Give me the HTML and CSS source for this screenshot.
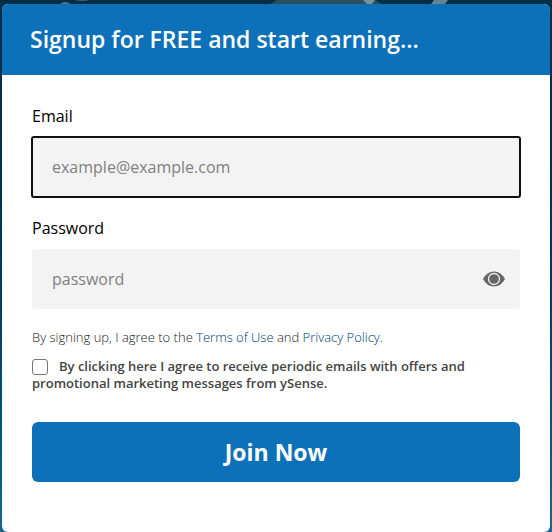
FILE: index.html
```html
<!DOCTYPE html>
<html lang="en">
<head>
<meta charset="utf-8">
<meta name="viewport" content="width=device-width, initial-scale=1">
<title>Signup</title>
<link rel="stylesheet" href="styles.css">
</head>
<body>
<svg class="backdrop" viewBox="0 0 552 4" aria-hidden="true">
  <path d="M60 4Q65 0 71 4Z" fill="#54717d"/>
  <path d="M75 0H90Q82 2 75 0Z" fill="#42616e"/>
  <path d="M270 4L277 0H375L382 4Z" fill="#294e5e"/>
  <path d="M363 0H375L372 4H367Z" fill="#78919b"/>
  <path d="M431 4L434 0H448L445 4Z" fill="#648290"/>
</svg>
<main class="card">
  <header class="card-header">
    <h1>Signup for FREE and start earning...</h1>
  </header>
  <form class="form">
    <label class="label" for="email">Email</label>
    <input class="field field-active" id="email" type="email" placeholder="example@example.com">
    <label class="label" for="password">Password</label>
    <div class="password">
      <input class="field" id="password" type="password" placeholder="password">
      <button class="reveal" type="button" aria-label="Show password">
        <svg viewBox="0 0 22 16" width="22" height="16" aria-hidden="true">
          <path d="M0 8Q4 .5 11 .5T22 8Q18 15.500 11 15.500T0 8Z" fill="#666"/>
          <circle cx="11" cy="8" r="5.500" fill="#666" stroke="#f3f3f3" stroke-width="1.300"/>
        </svg>
      </button>
    </div>
    <p class="terms">By signing up, I agree to the <a href="#terms">Terms of Use</a> and <a href="#privacy">Privacy Policy</a>.</p>
    <div class="consent">
      <input class="check" id="consent" type="checkbox"><label for="consent">By clicking here I agree to receive periodic emails with offers and promotional marketing messages from ySense.</label>
    </div>
    <button class="submit" type="submit">Join Now</button>
  </form>
</main>
</body>
</html>
```
FILE: styles.css
```css
* {
  box-sizing: border-box;
}

html {
  min-height: 100%;
  background: linear-gradient(#002e45, #00304a 30%, #003f66 60%, #00557f 80%, #1c668e);
}

body {
  margin: 0;
  padding: 4px 2px 0;
  font-family: "Open Sans", "Noto Sans", sans-serif;
  font-size: 16px;
  color: #000;
}

.backdrop {
  position: absolute;
  top: 0;
  left: 0;
  width: 100%;
}

.card {
  position: relative;
  overflow: hidden;
  border-radius: 6px;
  background: #fff;
}

.card-header {
  padding: 20px 28px;
  background: #0d71b9;
}

h1 {
  margin: 0;
  font-size: 23px;
  font-weight: 650;
  line-height: 31px;
  color: #fff;
}

.form {
  padding: 30px 30px 50px;
}

.label {
  display: block;
  margin-bottom: 10px;
  line-height: 22px;
}

.field {
  display: block;
  width: 100%;
  height: 60px;
  padding: 0 20px;
  border: 0;
  border-radius: 4px;
  background: #f3f3f3;
  font: inherit;
}

.field::placeholder {
  color: #808080;
}

.field-active {
  margin-bottom: 20px;
  border-radius: 2px;
  outline: 2px solid #101010;
  outline-offset: -1px;
}

.password {
  position: relative;
}

.reveal {
  position: absolute;
  top: 22px;
  right: 15px;
  padding: 0;
  border: 0;
  background: none;
}

.reveal svg {
  display: block;
}

.terms {
  margin: 20px 0 12px;
  font-size: 13px;
  font-weight: 300;
  line-height: 17px;
  color: #222;
}

.terms a {
  color: #003a70;
  text-decoration: none;
}

.consent {
  font-size: 13px;
  font-weight: 600;
  line-height: 17px;
  color: #444;
}

.check {
  appearance: none;
  width: 16px;
  height: 16px;
  margin: 0 11px 0 0;
  border: 1px solid #767676;
  border-radius: 3px;
  background: #fff;
  vertical-align: -4px;
}

.submit {
  display: block;
  width: 100%;
  height: 60px;
  margin-top: 30px;
  border: 0;
  border-radius: 6px;
  background: #0d71b9;
  font: inherit;
  font-size: 23px;
  font-weight: 700;
  color: #fff;
}
```
